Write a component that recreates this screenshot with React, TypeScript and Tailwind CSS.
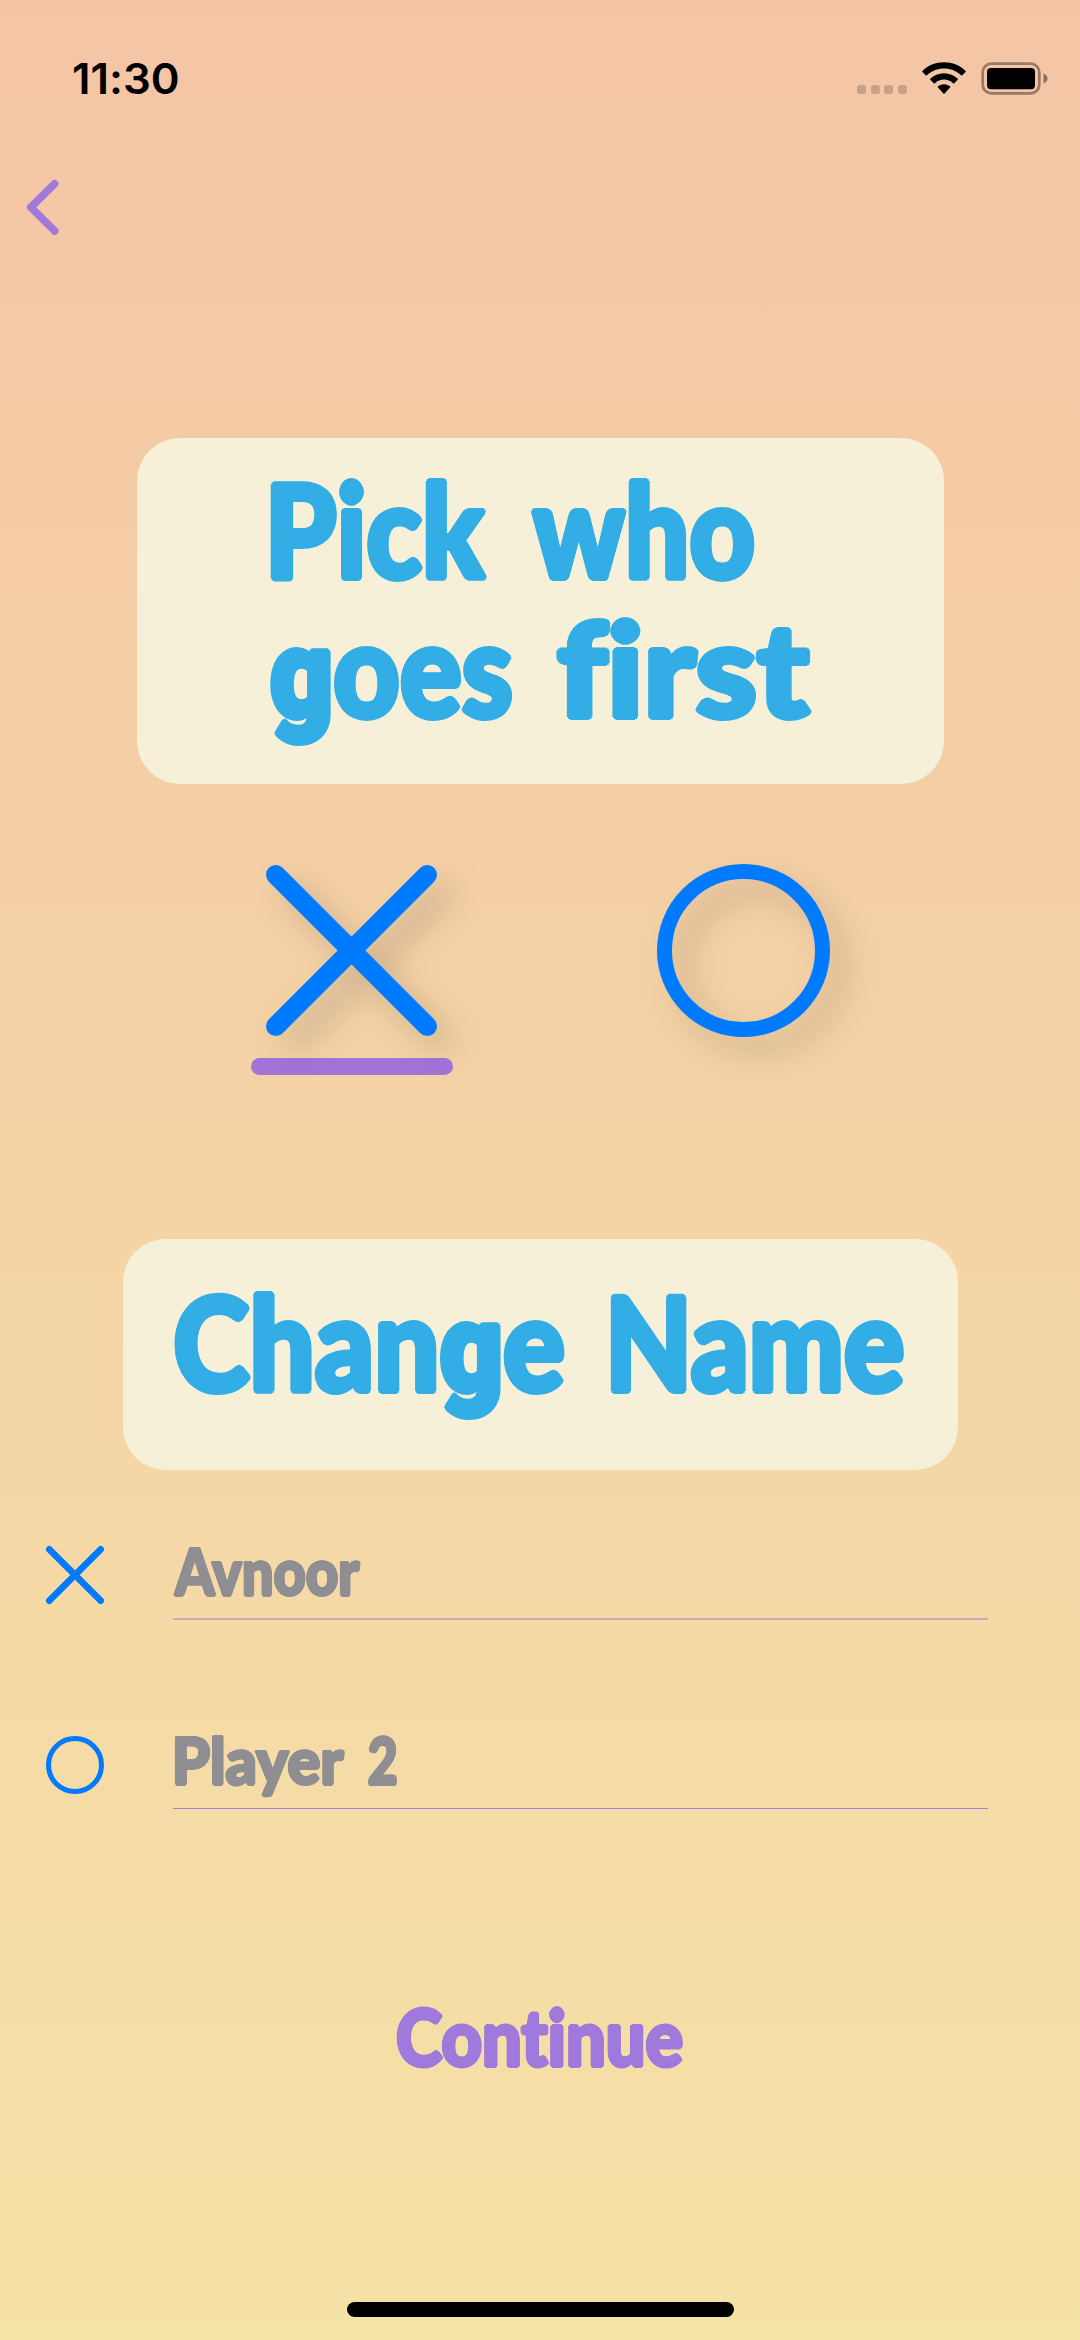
import { useLayoutEffect, useRef, useState } from "react";

/** One word, stretched or condensed so that its ink fills exactly `width` pixels. */
function Word({ text, width, pad = 0 }: { text: string; width: number; pad?: number }) {
  const ref = useRef<HTMLSpanElement>(null);
  const [transform, setTransform] = useState("none");

  useLayoutEffect(() => {
    const el = ref.current!;
    const ctx = document.createElement("canvas").getContext("2d")!;
    const measure = (glyph: Element) => {
      const style = getComputedStyle(glyph);
      ctx.font = `${style.fontWeight} ${style.fontSize} ${style.fontFamily}`;
      return ctx.measureText(glyph.textContent!.slice(0, 1));
    };
    const parts = el.children;
    const first = measure(parts[0]);
    const lastPart = parts[parts.length - 1];
    const lastStyle = getComputedStyle(lastPart);
    ctx.font = `${lastStyle.fontWeight} ${lastStyle.fontSize} ${lastStyle.fontFamily}`;
    const last = ctx.measureText(text.slice(-1));
    const left = -first.actualBoundingBoxLeft;
    const right = last.width - last.actualBoundingBoxRight;
    const scale = width / (el.offsetWidth - left - right + 2 * pad);
    setTransform(`translateX(${(pad - left) * scale}px) scaleX(${scale})`);
  }, [text, width, pad]);

  return (
    <span className="block shrink-0" style={{ width }}>
      <span ref={ref} className="block w-max origin-left whitespace-nowrap [font-variant-ligatures:none]" style={{ transform }}>
        {text.split(/(g)/).filter(Boolean).map((part, i) => (
          <span key={i} className={part === "g" ? "font-['Roboto',sans-serif] text-[0.95em] leading-none" : ""}>
            {part}
          </span>
        ))}
      </span>
    </span>
  );
}

const TITLE =
  "font-['Lato',sans-serif] font-black text-[130px] leading-[138.5px] text-[#32ade6] [text-shadow:3px_0_#32ade6,-3px_0_#32ade6,0_3px_#32ade6,0_-3px_#32ade6,2px_2px_#32ade6,-2px_2px_#32ade6,2px_-2px_#32ade6,-2px_-2px_#32ade6]";

const FIELD =
  "font-['Lato',sans-serif] font-black text-[65px] leading-[84px] text-[#8e8e93] [text-shadow:1.5px_0_#8e8e93,-1.5px_0_#8e8e93,0_1.5px_#8e8e93,0_-1.5px_#8e8e93,1px_1px_#8e8e93,-1px_1px_#8e8e93,1px_-1px_#8e8e93,-1px_-1px_#8e8e93]";

const ACTION =
  "font-['Lato',sans-serif] font-black text-[78px] leading-[96px] text-[#9f79dc] [text-shadow:2px_0_#9f79dc,-2px_0_#9f79dc,0_2px_#9f79dc,0_-2px_#9f79dc,1.4px_1.4px_#9f79dc,-1.4px_1.4px_#9f79dc,1.4px_-1.4px_#9f79dc,-1.4px_-1.4px_#9f79dc]";

function StatusBar() {
  return (
    <header className="flex h-[156px] items-start justify-between pl-[73px] pr-[32px] pt-[62px]">
      <div className="-mt-[8px] font-['Inter',sans-serif] text-[42.5px] font-semibold leading-[50px] text-black">
        <Word text="11:30" width={105} />
      </div>
      <div className="flex h-[33px] items-end">
        <div className="mb-[1px] mr-[15px] flex gap-[4.6px]">
          {[0, 1, 2, 3].map((i) => (
            <span key={i} className="size-[9px] rounded-[3px] bg-[#c5a187]" />
          ))}
        </div>
        <svg className="mr-[15px] h-[33px] w-[44px]" viewBox="0 0 44 33">
          <path d="M22 0.2C30.500 0.200 38.200 3.600 43.600 8.900Q44 9.400 43.500 9.900L40.300 13.200Q39.700 13.800 39.100 13.200C34.600 9 28.600 6.500 22 6.500S9.400 9 4.900 13.200Q4.300 13.800 3.700 13.200L0.500 9.900Q0 9.400 0.400 8.900C5.800 3.600 13.500 0.200 22 0.200Z" />
          <path d="M22 11.200C27.400 11.200 32.200 13.300 35.700 16.700Q36.200 17.200 35.700 17.700L32.200 21.200Q31.600 21.700 31 21.200C28.600 18.900 25.500 17.600 22 17.600S15.400 18.900 13 21.200Q12.400 21.700 11.800 21.200L8.300 17.700Q7.800 17.200 8.300 16.700C11.800 13.300 16.600 11.200 22 11.200Z" />
          <path d="M22 22.300C24.500 22.300 26.600 23.200 28.100 24.600Q28.600 25.100 28.100 25.600L22.600 31.500Q22 32.100 21.400 31.500L15.900 25.600Q15.400 25.100 15.900 24.600C17.400 23.200 19.500 22.300 22 22.300Z" />
        </svg>
        <svg className="h-[33px] w-[67px]" viewBox="0 0 67 33">
          <rect x="1.700" y="1.700" width="56.600" height="29.600" rx="8.500" fill="none" stroke="#977a67" strokeWidth="2.700" />
          <rect x="6" y="5.900" width="48" height="21.400" rx="4" />
          <path d="M62.500 11.500C65 12.500 66.500 14.300 66.500 16.500S65 20.500 62.500 21.500Z" fill="#8a6f5e" />
        </svg>
      </div>
    </header>
  );
}

function Cross({ className, strokeWidth }: { className: string; strokeWidth: number }) {
  const near = strokeWidth / 2;
  const far = 171 - near;
  return (
    <svg className={className} viewBox="0 0 171 171" overflow="visible">
      <path
        d={`M${near} ${near}L${far} ${far}M${far} ${near}L${near} ${far}`}
        fill="none"
        stroke="#007aff"
        strokeWidth={strokeWidth}
        strokeLinecap="round"
      />
    </svg>
  );
}

function Ring({ className, strokeWidth }: { className: string; strokeWidth: number }) {
  return (
    <svg className={className} viewBox="0 0 173 173" overflow="visible">
      <circle cx="86.500" cy="86.500" r={86.5 - strokeWidth / 2} fill="none" stroke="#007aff" strokeWidth={strokeWidth} />
    </svg>
  );
}

export default function App() {
  return (
    <main className="flex h-[2340px] w-[1080px] flex-col overflow-hidden bg-linear-to-b from-[#f4c5a5] to-[#f5e2a6]">
      <StatusBar />

      <nav className="h-[282px] shrink-0 pl-[26px] pt-[23px]">
        <button className="block" aria-label="Back">
          <svg className="h-[56px] w-[34px]" viewBox="0 0 34 56">
            <path d="M28.700 4.700L4.800 28.200L28.700 52" fill="none" stroke="#9f79dc" strokeWidth="7.600" strokeLinecap="round" strokeLinejoin="round" />
          </svg>
        </button>
      </nav>

      <section className="ml-[137px] h-[346px] w-[807px] shrink-0 rounded-[43px] bg-[#f7f0d8] pl-[133px] pt-[21px]">
        <h1 className={TITLE}>
          <span className="flex h-[138.5px] gap-[42px]">
            <Word text="Pick" width={218} pad={3} />
            <Word text="who" width={225} pad={3} />
          </span>
          <span className="flex h-[138.5px] gap-[44px]">
            <Word text="goes" width={242} pad={3} />
            <Word text="first" width={256} pad={3} />
          </span>
        </h1>
      </section>

      <section className="flex h-[455px] shrink-0 pl-[250.500px] pt-[80px]">
        <div className="flex h-[211px] w-[202px] flex-col items-center justify-between">
          <Cross className="mt-[1px] size-[171px] drop-shadow-[16px_16px_16px_rgba(0,0,0,0.17)]" strokeWidth={19.5} />
          <div className="h-[17.500px] w-[202px] rounded-full bg-[#a374d8]" />
        </div>
        <Ring className="ml-[204px] size-[173px] drop-shadow-[16px_16px_16px_rgba(0,0,0,0.17)]" strokeWidth={15} />
      </section>

      <section className="ml-[123px] h-[231px] w-[835px] shrink-0 rounded-[43px] bg-[#f7f0d8] pl-[51px] pt-[33px]">
        <h2 className={`flex gap-[46px] ${TITLE}`}>
          <Word text="Change" width={390} pad={3} />
          <Word text="Name" width={294} pad={3} />
        </h2>
      </section>

      <section className="flex h-[190px] shrink-0 items-start pl-[46px] pt-[58px]">
        <Cross className="mt-[18px] size-[58px]" strokeWidth={19.5} />
        <div className={`ml-[69px] flex h-[92px] w-[815px] border-b-2 border-[#cca8bb] ${FIELD}`}>
          <Word text="Avnoor" width={188} pad={1.5} />
        </div>
      </section>

      <section className="flex h-[190px] shrink-0 items-start pl-[46px] pt-[57px]">
        <Ring className="mt-[19px] size-[58px]" strokeWidth={15} />
        <div className={`ml-[69px] flex h-[92px] w-[815px] gap-[23px] border-b border-[#a67fd6] pl-[1px] ${FIELD}`}>
          <Word text="Player" width={171} pad={1.5} />
          <Word text="2" width={29} pad={1.5} />
        </div>
      </section>

      <button className={`ml-[396px] mt-[138px] block w-[287px] text-left ${ACTION}`}>
        <Word text="Continue" width={287} pad={2} />
      </button>

      <div className="mb-[23px] ml-[347px] mt-auto h-[15px] w-[387px] shrink-0 rounded-full bg-black" />
    </main>
  );
}
